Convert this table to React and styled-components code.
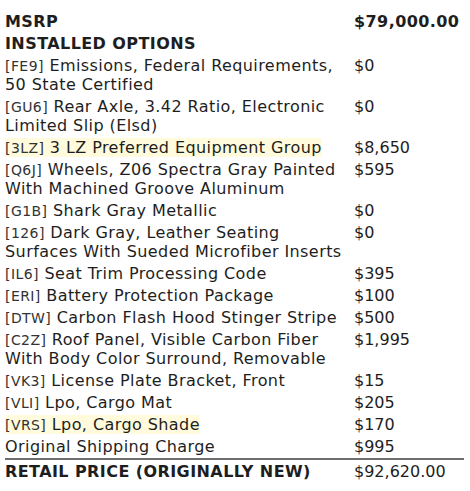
import React from "react";
import styled, { createGlobalStyle } from "styled-components";

const GlobalStyle = createGlobalStyle`
  body {
    margin: 0;
    background: #ffffff;
    font-family: "DejaVu Sans", Verdana, sans-serif;
    color: #1e1e1e;
  }
`;

const Sheet = styled.div`
  width: 459px;
  padding: 10px 6px 0 5px;
`;

const Row = styled.div`
  display: grid;
  grid-template-columns: 1fr 110px;
  padding: 1.5px 0;
  font-size: 16px;
  line-height: 19px;
  letter-spacing: 0.42px;
  font-weight: ${(p) => (p.$bold ? 700 : 400)};
  border-top: ${(p) => (p.$total ? "2px solid #6e6e6e" : "none")};
  margin-top: ${(p) => (p.$total ? "1px" : "0")};
`;

const Label = styled.div`
  padding-right: 12px;
`;

const Mark = styled.span`
  background: ${(p) => (p.$hl ? "#fffbdc" : "transparent")};
`;

const Code = styled.span`
  font-size: 14px;
  line-height: 1;
  color: #333;
`;

const Price = styled.div`
  font-weight: ${(p) => (p.$bold ? 700 : 400)};
  letter-spacing: ${(p) => (p.$bold ? "0.42px" : "0")};
`;

const options = [
  ["FE9", "Emissions, Federal Requirements, 50 State Certified", "$0"],
  ["GU6", "Rear Axle, 3.42 Ratio, Electronic Limited Slip (Elsd)", "$0"],
  ["3LZ", "3 LZ Preferred Equipment Group", "$8,650", true],
  ["Q6J", "Wheels, Z06 Spectra Gray Painted With Machined Groove Aluminum", "$595"],
  ["G1B", "Shark Gray Metallic", "$0"],
  ["126", "Dark Gray, Leather Seating Surfaces With Sueded Microfiber Inserts", "$0"],
  ["IL6", "Seat Trim Processing Code", "$395"],
  ["ERI", "Battery Protection Package", "$100"],
  ["DTW", "Carbon Flash Hood Stinger Stripe", "$500"],
  ["C2Z", "Roof Panel, Visible Carbon Fiber With Body Color Surround, Removable", "$1,995"],
  ["VK3", "License Plate Bracket, Front", "$15"],
  ["VLI", "Lpo, Cargo Mat", "$205"],
  ["VRS", "Lpo, Cargo Shade", "$170", true],
];

export default function App() {
  return (
    <>
      <GlobalStyle />
      <Sheet>
        <Row $bold>
          <Label>MSRP</Label>
          <Price $bold>$79,000.00</Price>
        </Row>
        <Row $bold>
          <Label>INSTALLED OPTIONS</Label>
          <Price />
        </Row>
        {options.map(([code, text, price, hl]) => (
          <Row key={code}>
            <Label>
              <Mark $hl={hl}>
                <Code>[{code}]</Code> {text}
              </Mark>
            </Label>
            <Price>{price}</Price>
          </Row>
        ))}
        <Row>
          <Label>Original Shipping Charge</Label>
          <Price>$995</Price>
        </Row>
        <Row $total>
          <Label>
            <b>RETAIL PRICE (ORIGINALLY NEW)</b>
          </Label>
          <Price>$92,620.00</Price>
        </Row>
      </Sheet>
    </>
  );
}
